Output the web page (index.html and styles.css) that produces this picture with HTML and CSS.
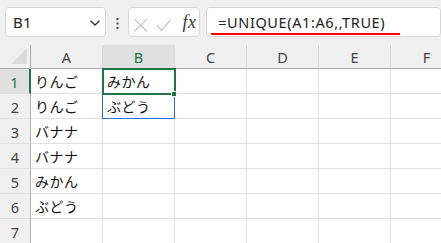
FILE: index.html
```html
<!DOCTYPE html>
<html lang="ja">
<head>
<meta charset="utf-8">
<link rel="stylesheet" href="styles.css">
</head>
<body>
<div class="app">
  <div class="topbar">
    <div class="namebox">
      <span class="name">B1</span>
      <svg class="chev" width="10" height="6" viewBox="0 0 10 6"><path d="M0.5 0.8 L5 5 L9.5 0.8" fill="none" stroke="#333" stroke-width="1.3"/></svg>
    </div>
    <svg class="dots" width="3" height="12" viewBox="0 0 3 12"><rect x="0.5" y="0" width="2" height="2" fill="#444"/><rect x="0.5" y="4.5" width="2" height="2" fill="#444"/><rect x="0.5" y="9" width="2" height="2" fill="#444"/></svg>
    <div class="fxbox">
      <svg class="fxicons" width="46" height="28" viewBox="0 0 46 28"><path d="M5.3 10.8 L18 23.5 M18 10.8 L5.3 23.5" stroke="#c4c4c4" stroke-width="1.2" fill="none"/><path d="M28 17 L32.5 22.5 L41.5 12" stroke="#c4c4c4" stroke-width="1.2" fill="none"/></svg>
      <span class="fx">fx</span>
    </div>
    <div class="formula"><span class="ftext">=UNIQUE(A1:A6,,TRUE)</span></div>
  </div>
  <div class="sheet">
    <div class="grid">
      <div class="corner"><span class="tri"></span></div>
      <div class="ch">A</div>
      <div class="ch sel">B</div>
      <div class="ch">C</div>
      <div class="ch">D</div>
      <div class="ch">E</div>
      <div class="ch">F</div>

      <div class="rh sel">1</div><div class="c">りんご</div><div class="c">みかん</div><div class="c"></div><div class="c"></div><div class="c"></div><div class="c"></div>
      <div class="rh">2</div><div class="c">りんご</div><div class="c">ぶどう</div><div class="c"></div><div class="c"></div><div class="c"></div><div class="c"></div>
      <div class="rh">3</div><div class="c">バナナ</div><div class="c"></div><div class="c"></div><div class="c"></div><div class="c"></div><div class="c"></div>
      <div class="rh">4</div><div class="c">バナナ</div><div class="c"></div><div class="c"></div><div class="c"></div><div class="c"></div><div class="c"></div>
      <div class="rh">5</div><div class="c">みかん</div><div class="c"></div><div class="c"></div><div class="c"></div><div class="c"></div><div class="c"></div>
      <div class="rh">6</div><div class="c">ぶどう</div><div class="c"></div><div class="c"></div><div class="c"></div><div class="c"></div><div class="c"></div>
      <div class="rh">7</div><div class="c"></div><div class="c"></div><div class="c"></div><div class="c"></div><div class="c"></div><div class="c"></div>
    </div>
    <div class="spill"></div>
    <div class="active"></div>
    <div class="handle"></div>
  </div>
</div>
</body>
</html>
```
FILE: styles.css
```css
html, body {
  margin: 0;
  padding: 0;
  background: #f0f0f0;
  overflow: hidden;
}
.app {
  width: 441px;
  height: 243px;
  overflow: hidden;
  font-family: "Noto Sans", "Noto Sans CJK JP", sans-serif;
}
.topbar {
  box-sizing: border-box;
  height: 45px;
  padding: 7px 0 0 5px;
  display: flex;
  align-items: flex-start;
  background: #f0f0f0;
}
.namebox {
  box-sizing: border-box;
  width: 101px;
  height: 30px;
  background: #fff;
  border: 1px solid #d6d6d6;
  border-radius: 4px;
  display: flex;
  align-items: center;
  padding: 0 5px 0 7px;
}
.name {
  font-size: 15px;
  color: #222;
  letter-spacing: 0.3px;
}
.chev {
  margin-left: auto;
  margin-top: 1px;
}
.dots {
  margin: 11px 0 0 10px;
}
.fxbox {
  box-sizing: border-box;
  margin-left: 9px;
  width: 73px;
  height: 30px;
  background: #fff;
  border: 1px solid #d6d6d6;
  border-radius: 4px;
  display: flex;
  align-items: center;
}
.fxicons {
  flex: none;
}
.fx {
  margin-left: 8px;
  font-family: "Liberation Serif", "DejaVu Serif", serif;
  font-style: italic;
  font-size: 18px;
  color: #333;
  letter-spacing: 0.5px;
}
.formula {
  box-sizing: border-box;
  margin-left: 6px;
  width: 236px;
  height: 30px;
  background: #fff;
  border: 1px solid #d6d6d6;
  border-radius: 4px;
  padding-left: 4px;
  display: flex;
  align-items: flex-start;
}
.ftext {
  margin-top: 4px;
  padding: 0 15px 1px 7px;
  border-bottom: 2px solid #ff0000;
  font-size: 14.5px;
  line-height: 20px;
  color: #222;
  letter-spacing: 0.6px;
}
.sheet {
  position: relative;
  background: #fff;
}
.grid {
  display: grid;
  grid-template-columns: 31px repeat(6, 72px);
  grid-template-rows: 24px repeat(7, 25px);
  font-size: 14px;
}
.corner {
  box-sizing: border-box;
  background: #f0f0f0;
  border-right: 1px solid #ababab;
  border-bottom: 1px solid #ababab;
  position: relative;
}
.tri {
  position: absolute;
  right: 3px;
  bottom: 4px;
  width: 0;
  height: 0;
  border-left: 16px solid transparent;
  border-bottom: 16px solid #dadada;
}
.ch {
  box-sizing: border-box;
  background: #f0f0f0;
  border-right: 1px solid #d8d8d8;
  border-bottom: 1px solid #ababab;
  display: flex;
  align-items: center;
  justify-content: center;
  color: #444;
  font-size: 14.5px;
  padding-top: 1px;
}
.ch.sel {
  background: #e0e0e0;
  color: #217346;
}
.rh {
  box-sizing: border-box;
  background: #f0f0f0;
  border-right: 1px solid #ababab;
  border-bottom: 1px solid #dedede;
  display: flex;
  align-items: center;
  justify-content: center;
  color: #444;
  font-size: 14.5px;
  padding-top: 1px;
}
.rh.sel {
  background: #e0e0e0;
  color: #217346;
  border-right: 2px solid #217346;
}
.c {
  box-sizing: border-box;
  border-right: 1px solid #e0e0e0;
  border-bottom: 1px solid #e0e0e0;
  display: flex;
  align-items: center;
  padding: 0 0 0 4px;
  font-family: "Noto Sans CJK JP", sans-serif;
  color: #111;
  font-size: 14px;
  letter-spacing: 0.5px;
  white-space: nowrap;
}
.active {
  position: absolute;
  box-sizing: border-box;
  left: 102px;
  top: 23px;
  width: 74px;
  height: 27px;
  border: 2px solid #217346;
}
.spill {
  position: absolute;
  box-sizing: border-box;
  left: 102px;
  top: 48px;
  width: 73px;
  height: 26px;
  border: 1px solid #2f6fd8;
}
.handle {
  position: absolute;
  left: 171px;
  top: 46px;
  width: 6px;
  height: 6px;
  box-sizing: border-box;
  background: #217346;
  border: 1px solid #fff;
}
```
